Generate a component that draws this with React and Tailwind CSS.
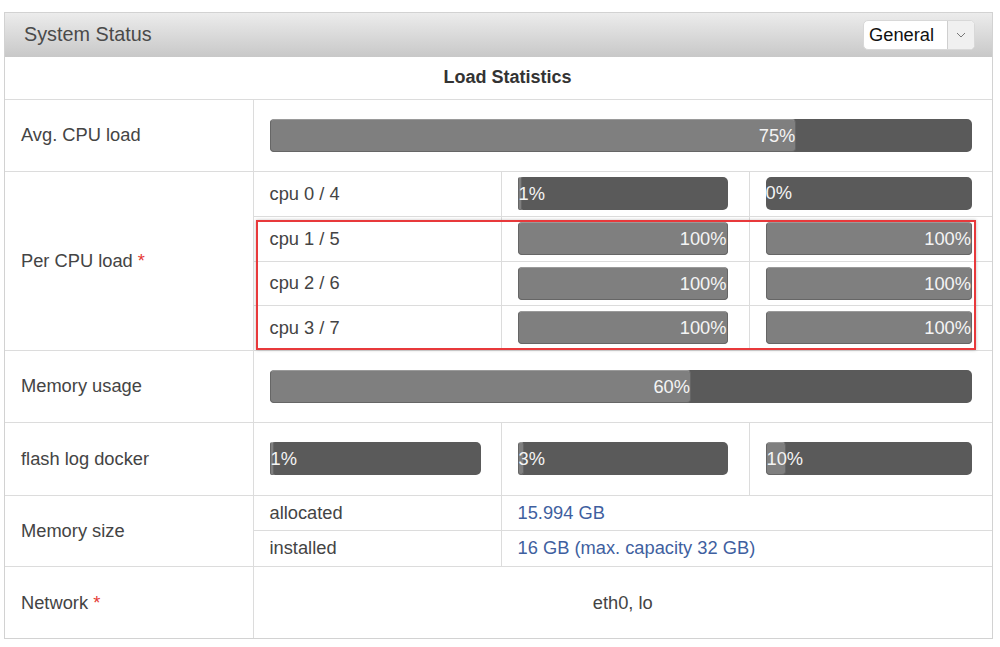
import React from 'react';

// ─── Bar ──────────────────────────────────────────────────────────────────────

function LoadBar({ value }) {
  return (
    <div className="h-[33px] w-full rounded-[5px] bg-[#5a5a5a] overflow-visible">
      <div
        className="h-full rounded-[4px] bg-[#7f7f7f] border border-[#666] border-t-[#9a9a9a] text-right whitespace-nowrap leading-[31px] text-[#f4f4f4] text-[18.3px]"
        style={{ width: `${value}%`, minWidth: value > 0 ? 4 : 0, borderWidth: value > 0 ? 1 : 0 }}
      >
        {value}%
      </div>
    </div>
  );
}

const cellBorder = 'border border-[#dcdcdc]';

const CPU_ROWS = [
  { name: 'cpu 0 / 4', a: 1, b: 0, h: 'h-[45px]' },
  { name: 'cpu 1 / 5', a: 100, b: 100, h: 'h-[45px]' },
  { name: 'cpu 2 / 6', a: 100, b: 100, h: 'h-[44px]' },
  { name: 'cpu 3 / 7', a: 100, b: 100, h: 'h-[45px]' },
];

// ─── Component ────────────────────────────────────────────────────────────────

export default function App() {
  return (
    <div className="min-h-[647px] bg-white pt-[12px] pl-[4px] text-[#444] font-['Liberation_Sans',Arial,sans-serif]">
      <div className="relative w-[989px] border border-[#d2d2d2]">
        {/* Header */}
        <div className="h-[44px] flex items-center justify-between pl-[19px] pr-[17px] bg-linear-to-b from-[#ececec] to-[#c8c8c8]">
          <span className="text-[19.8px] text-[#4a4a4a]">System Status</span>
          <div className="flex h-[30px] w-[112px] rounded-[5px] bg-white border border-[#d8d8d8] overflow-hidden">
            <span className="flex-1 pl-[5px] text-[18.3px] leading-[28px] text-[#111]">General</span>
            <span className="w-[27px] flex items-center justify-center bg-[#f0f0f0] border-l border-[#cfcfcf]">
              <svg width="10" height="6" viewBox="0 0 10 6" fill="none" stroke="#777" strokeWidth="1">
                <path d="M1 1 L5 5 L9 1" />
              </svg>
            </span>
          </div>
        </div>

        <table className="w-full border-collapse text-[18.3px]">
          <colgroup>
            <col className="w-[248px]" />
            <col className="w-[248px]" />
            <col className="w-[248px]" />
            <col />
          </colgroup>
          <tbody>
            <tr className="h-[42px]">
              <td colSpan={4} className="border-b border-[#dcdcdc] pl-[18px] text-center font-bold text-[18px] text-[#333]">
                Load Statistics
              </td>
            </tr>

            <tr className="h-[72px]">
              <td className={`${cellBorder} border-l-0 pl-[16px]`}>Avg. CPU load</td>
              <td colSpan={3} className={`${cellBorder} border-r-0 pl-[16px] pr-[20px]`}>
                <LoadBar value={75} />
              </td>
            </tr>

            {CPU_ROWS.map((row, i) => (
              <tr key={row.name} className={row.h}>
                {i === 0 && (
                  <td rowSpan={4} className={`${cellBorder} border-l-0 pl-[16px]`}>
                    Per CPU load <span className="text-[#e53935]">*</span>
                  </td>
                )}
                <td className={`${cellBorder} pl-[16px]`}>{row.name}</td>
                <td className={`${cellBorder} pl-[16px] pr-[21px]`}>
                  <LoadBar value={row.a} />
                </td>
                <td className={`${cellBorder} border-r-0 pl-[16px] pr-[20px]`}>
                  <LoadBar value={row.b} />
                </td>
              </tr>
            ))}

            <tr className="h-[72px]">
              <td className={`${cellBorder} border-l-0 pl-[16px]`}>Memory usage</td>
              <td colSpan={3} className={`${cellBorder} border-r-0 pl-[16px] pr-[20px]`}>
                <LoadBar value={60} />
              </td>
            </tr>

            <tr className="h-[73px]">
              <td className={`${cellBorder} border-l-0 pl-[16px]`}>flash log docker</td>
              <td className={`${cellBorder} pl-[16px] pr-[20px]`}>
                <LoadBar value={1} />
              </td>
              <td className={`${cellBorder} pl-[16px] pr-[21px]`}>
                <LoadBar value={3} />
              </td>
              <td className={`${cellBorder} border-r-0 pl-[16px] pr-[20px]`}>
                <LoadBar value={10} />
              </td>
            </tr>

            <tr className="h-[35px]">
              <td rowSpan={2} className={`${cellBorder} border-l-0 pl-[16px]`}>Memory size</td>
              <td className={`${cellBorder} pl-[16px]`}>allocated</td>
              <td colSpan={2} className={`${cellBorder} border-r-0 pl-[16px] text-[#3f5f9f]`}>15.994 GB</td>
            </tr>
            <tr className="h-[36px]">
              <td className={`${cellBorder} pl-[16px]`}>installed</td>
              <td colSpan={2} className={`${cellBorder} border-r-0 pl-[16px] text-[#3f5f9f]`}>
                16 GB (max. capacity 32 GB)
              </td>
            </tr>

            <tr className="h-[72px]">
              <td className={`${cellBorder} border-l-0 border-b-0 pl-[16px]`}>
                Network <span className="text-[#e53935]">*</span>
              </td>
              <td colSpan={3} className={`${cellBorder} border-r-0 border-b-0 text-center`}>
                eth0, lo
              </td>
            </tr>
          </tbody>
        </table>

        {/* Highlight box over cpu rows 1–3 */}
        <div className="absolute left-[251px] top-[207px] w-[720px] h-[130px] border-2 border-[#e8393b] shadow-[0_0_3px_rgba(0,0,0,0.25)] pointer-events-none" />
      </div>
    </div>
  );
}
